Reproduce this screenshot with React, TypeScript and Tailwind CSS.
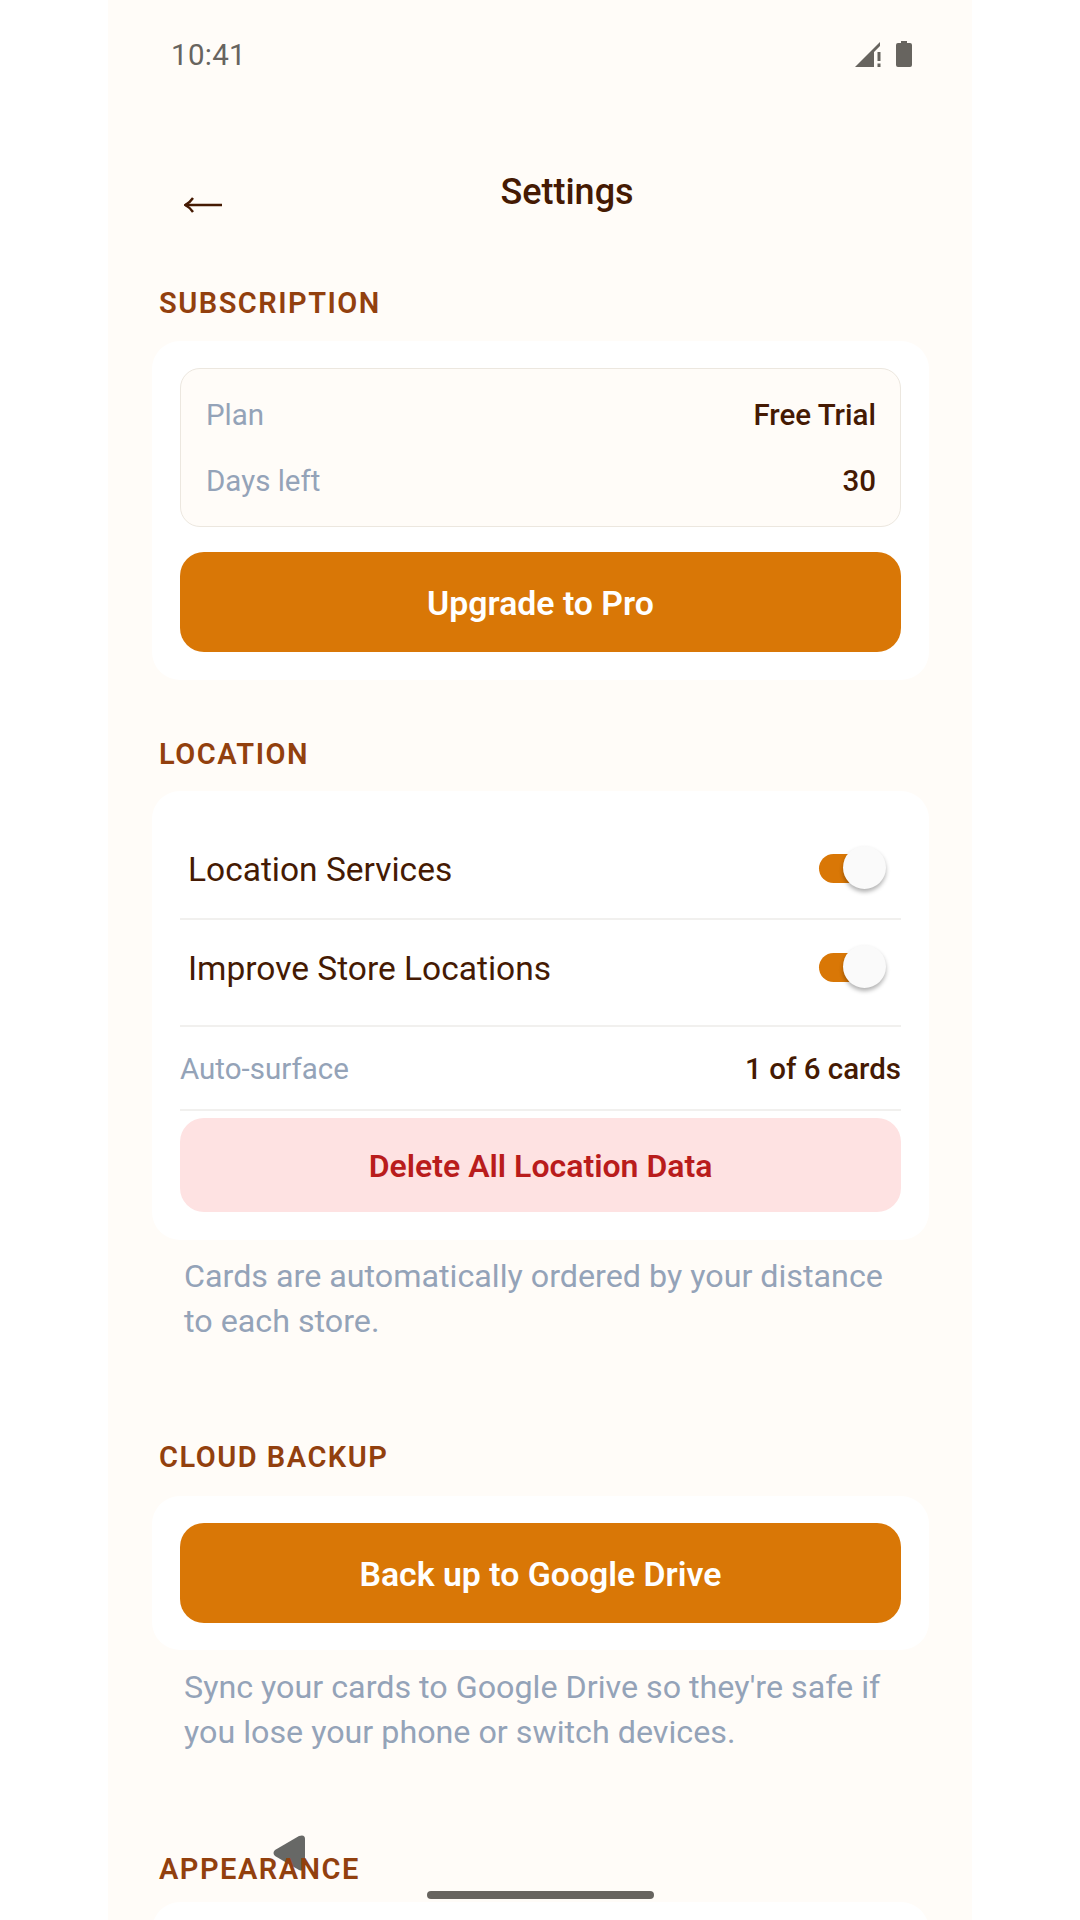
import React from "react";

const Label = ({ children, className = "" }: { children: React.ReactNode; className?: string }) => (
  <h2 className={`relative z-10 ml-[51px] text-[29px] leading-[30px] font-semibold tracking-[1.5px] text-[#92400e] ${className}`}>{children}</h2>
);

const Toggle = () => (
  <div className="relative w-[67px] h-[29px] mr-[15px] mb-[2px]">
    <div className="absolute left-0 top-0 w-[50px] h-[29px] rounded-full bg-[#d97706]" />
    <div className="absolute left-[24px] top-[-8px] w-[43px] h-[43px] rounded-full bg-[#fafafa] shadow-[0_3px_4px_rgba(0,0,0,0.3)]" />
  </div>
);

const Help = ({ children }: { children: React.ReactNode }) => (
  <p className="ml-[76px] mr-[68px] text-[32.25px] leading-[45px] text-[#94a3b8]">{children}</p>
);

export default function App() {
  return (
    <div className="relative w-[1080px] h-[1920px] overflow-hidden bg-white font-['Roboto',sans-serif]">
      <div className="relative mx-[108px] w-[864px] h-[1920px] overflow-hidden bg-[#fffcf8]">
        <div className="flex items-center justify-between h-[108px] pl-[63px] pr-[60px]">
          <span className="text-[29.5px] mt-[2px] text-[#67645f] tracking-[0.3px]">10:41</span>
          <div className="flex items-end gap-[15px]">
            <svg width="26" height="25" viewBox="0 0 26 25" fill="#67645f">
              <path d="M0 25 L25 0 V4 L19 10 V25 Z" />
              <rect x="22.5" y="10" width="3" height="9" />
              <rect x="22.5" y="21.5" width="3" height="3.5" />
            </svg>
            <svg width="16" height="26" viewBox="0 0 16 26" fill="#67645f">
              <path d="M5 0 H11 V2 H14 Q16 2 16 4 V24 Q16 26 14 26 H2 Q0 26 0 24 V4 Q0 2 2 2 H5 Z" />
            </svg>
          </div>
        </div>

        <header className="flex items-start h-[180px]">
          <svg className="ml-[76px] mt-[89px] text-[#451a03]" width="38" height="16" viewBox="0 0 38 16" fill="none" stroke="currentColor" strokeWidth="2.4">
            <path d="M1 8 H38" />
            <path d="M9 1 Q6 5.5 1.2 8 Q6 10.5 9 15" />
          </svg>
          <h1 className="ml-[245px] mt-[64px] w-[200px] text-center text-[36px] leading-[40px] font-medium text-[#451a03]">Settings</h1>
        </header>

        <Label>SUBSCRIPTION</Label>
        <section className="mt-[23px] ml-[44px] mr-[43px] rounded-[28px] bg-white p-[28px] pt-[27px]">
          <div className="h-[159px] rounded-[20px] border border-[#ece7df] bg-[#fffcf8] pl-[25px] pr-[24px] pt-[22px] text-[29.5px]">
            <div className="flex justify-between items-center h-[48px]">
              <span className="text-[#94a3b8]">Plan</span>
              <span className="font-medium text-[#451a03]">Free Trial</span>
            </div>
            <div className="flex justify-between items-center h-[48px] mt-[18px]">
              <span className="text-[#94a3b8]">Days left</span>
              <span className="font-medium text-[#451a03]">30</span>
            </div>
          </div>
          <button className="mt-[25px] w-full h-[100px] pt-[4px] rounded-[24px] bg-[#d97706] text-white text-[33.8px] font-semibold">Upgrade to Pro</button>
        </section>

        <Label className="mt-[59px]">LOCATION</Label>
        <section className="mt-[22px] ml-[44px] mr-[43px] rounded-[28px] bg-white px-[28px] pt-[30px] pb-[28px]">
          <div className="flex items-center justify-between h-[99px] pl-[8px] border-b-2 border-[#f1f0ee]">
            <span className="pt-[2px] text-[33.5px] text-[#451a03]">Location Services</span>
            <Toggle />
          </div>
          <div className="flex items-center justify-between h-[107px] pl-[8px] pb-[8px] border-b-2 border-[#f1f0ee]">
            <span className="pt-[2px] text-[33.5px] text-[#451a03]">Improve Store Locations</span>
            <Toggle />
          </div>
          <div className="flex items-center justify-between h-[84px] pt-[3px] border-b-2 border-[#f1f0ee] text-[29.5px]">
            <span className="text-[#94a3b8]">Auto-surface</span>
            <span className="font-medium text-[#451a03]">1 of 6 cards</span>
          </div>
          <button className="mt-[7px] w-full h-[94px] pt-[2px] rounded-[24px] bg-[#fee2e2] text-[#b91c1c] text-[32px] font-semibold">Delete All Location Data</button>
        </section>

        <div className="mt-[14px]">
          <Help>Cards are automatically ordered by your distance to each store.</Help>
        </div>

        <Label className="mt-[98px]">CLOUD BACKUP</Label>
        <section className="mt-[24px] ml-[44px] mr-[43px] rounded-[28px] bg-white p-[27px] px-[28px]">
          <button className="w-full h-[100px] pt-[4px] rounded-[24px] bg-[#d97706] text-white text-[33.8px] font-semibold">Back up to Google Drive</button>
        </section>

        <div className="mt-[15px]">
          <Help>Sync your cards to Google Drive so they're safe if you lose your phone or switch devices.</Help>
        </div>

        <Label className="mt-[99px]">APPEARANCE</Label>
        <section className="mt-[18px] ml-[44px] mr-[43px] h-[200px] rounded-[28px] bg-white" />

        <svg className="absolute left-[165px] top-[1835px]" width="32" height="36" viewBox="0 0 32 36" fill="#676866">
          <path d="M26 1 Q32 -1 32 4 V31 Q32 37 26 35 L2 21 Q-1 18 2 15 Z" />
        </svg>
        <div className="absolute left-[319px] top-[1891px] w-[227px] h-[8px] rounded-full bg-[#67645f]" />
      </div>
    </div>
  );
}
